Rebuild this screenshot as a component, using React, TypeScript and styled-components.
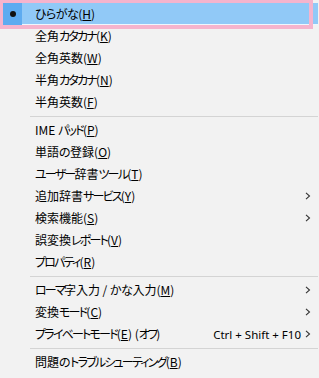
import React from "react";
import styled, { createGlobalStyle } from "styled-components";

const Global = createGlobalStyle`
  html, body { margin: 0; padding: 0; background: #f2f2f2; }
  body { font-family: "Noto Sans CJK JP", "Noto Sans", sans-serif; }
`;

const Menu = styled.div`
  position: relative;
  width: 319px;
  height: 378px;
  box-sizing: border-box;
  padding: 3px 1px 0 3px;
  background: #f2f2f2;
  display: flex;
  flex-direction: column;
  overflow: hidden;
`;

const Row = styled.div<{ $active?: boolean }>`
  display: grid;
  grid-template-columns: 19px 1fr auto 14px;
  align-items: center;
  height: 22px;
  background: ${(p) => (p.$active ? "#91c9f7" : "transparent")};
  box-shadow: ${(p) => (p.$active ? "inset 0 -1px 0 #eef6fd" : "none")};
  color: #000;
  font-size: 12px;
  font-feature-settings: "palt";
`;

const Check = styled.div<{ $active?: boolean }>`
  height: 100%;
  display: flex;
  align-items: center;
  justify-content: center;
  background: ${(p) => (p.$active ? "#5eabf0" : "transparent")};
`;

const Dot = styled.span`
  width: 6px;
  height: 6px;
  margin-left: 1px;
  border-radius: 50%;
  background: #111;
`;

const Label = styled.span`
  padding-left: 13px;
  white-space: nowrap;
  line-height: 22px;
`;

const Kana = styled.span<{ $kata?: boolean }>`
  letter-spacing: ${(p) => (p.$kata ? "-1.8px" : "-0.5px")};
`;

const Shortcut = styled.span`
  white-space: nowrap;
  font-family: "Noto Sans", sans-serif;
  font-size: 11.5px;
  padding-right: 3px;
`;

const Arrow = styled.div`
  display: flex;
  align-items: center;
  justify-content: flex-start;
  padding-left: 1px;
`;

const Separator = styled.div`
  height: 6px;
  display: flex;
  align-items: center;
  padding-left: 27px;
  &::after {
    content: "";
    flex: 1;
    height: 1px;
    background: #d4d4d4;
  }
`;

const Mark = styled.div`
  position: absolute;
  left: 0;
  top: 0;
  width: 313px;
  height: 29px;
  box-sizing: border-box;
  border-style: solid;
  border-color: #f5b4cd;
  border-width: 3px 4px 4px 3px;
  pointer-events: none;
`;

const Chevron = () => (
  <svg width="6" height="8" viewBox="0 0 6 8">
    <polyline points="1,0.8 4.5,4 1,7.2" fill="none" stroke="#333" strokeWidth="1.1" />
  </svg>
);

const SPLIT = /([\u3041-\u309f]+|[\u30a0-\u30ff]+)/;
const HIRA = /^[\u3041-\u309f]+$/;
const KATA = /^[\u30a0-\u30ff]+$/;

const Text = ({ s }: { s: string }) => (
  <>
    {s.split(SPLIT).map((part, i) =>
      KATA.test(part) ? (
        <Kana key={i} $kata>{part}</Kana>
      ) : HIRA.test(part) ? (
        <Kana key={i}>{part}</Kana>
      ) : (
        <React.Fragment key={i}>{part}</React.Fragment>
      )
    )}
  </>
);

type Item =
  | { sep: true }
  | { sep?: false; text: string; key: string; tail?: string; sub?: boolean; checked?: boolean; active?: boolean; shortcut?: string };

const items: Item[] = [
  { text: "ひらがな", key: "H", checked: true, active: true },
  { text: "全角カタカナ", key: "K" },
  { text: "全角英数", key: "W" },
  { text: "半角カタカナ", key: "N" },
  { text: "半角英数", key: "F" },
  { sep: true },
  { text: "IME パッド", key: "P" },
  { text: "単語の登録", key: "O" },
  { text: "ユーザー辞書ツール", key: "T" },
  { text: "追加辞書サービス", key: "Y", sub: true },
  { text: "検索機能", key: "S", sub: true },
  { text: "誤変換レポート", key: "V" },
  { text: "プロパティ", key: "R" },
  { sep: true },
  { text: "ローマ字入力 / かな入力", key: "M", sub: true },
  { text: "変換モード", key: "C", sub: true },
  { text: "プライベートモード", key: "E", tail: " (オフ)", sub: true, shortcut: "Ctrl + Shift + F10" },
  { sep: true },
  { text: "問題のトラブルシューティング", key: "B" },
];

export default function App() {
  return (
    <>
      <Global />
      <Menu>
        {items.map((it, i) =>
          it.sep ? (
            <Separator key={i} />
          ) : (
            <Row key={i} $active={it.active}>
              <Check $active={it.active}>{it.checked && <Dot />}</Check>
              <Label>
                <Text s={it.text} />(<u>{it.key}</u>){it.tail && <Text s={it.tail} />}
              </Label>
              <Shortcut>{it.shortcut}</Shortcut>
              <Arrow>{it.sub && <Chevron />}</Arrow>
            </Row>
          )
        )}
        <Mark />
      </Menu>
    </>
  );
}
